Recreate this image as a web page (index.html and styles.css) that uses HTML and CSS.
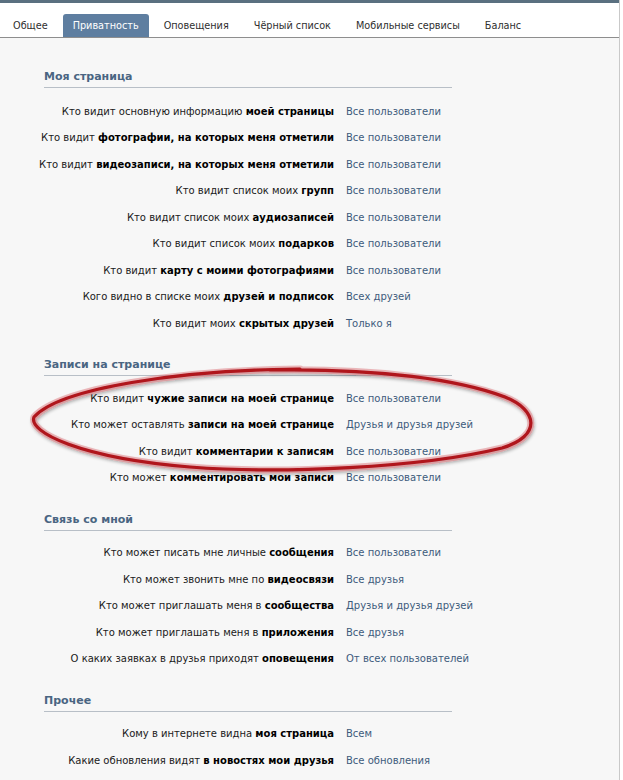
FILE: index.html
```html
<!DOCTYPE html>
<html lang="ru">
<head>
<meta charset="utf-8">
<title>Приватность</title>
<link rel="stylesheet" href="styles.css">
</head>
<body>
<div class="page">
  <div class="topbar"></div>
  <nav class="tabs">
    <a class="tab">Общее</a>
    <a class="tab active">Приватность</a>
    <a class="tab">Оповещения</a>
    <a class="tab">Чёрный список</a>
    <a class="tab">Мобильные сервисы</a>
    <a class="tab">Баланс</a>
  </nav>
  <main class="content">
    <section class="section">
      <h2 class="section-title">Моя страница</h2>
      <div class="rows">
        <div class="label">Кто видит основную информацию <b>моей страницы</b></div><div class="value">Все пользователи</div>
        <div class="label">Кто видит <b>фотографии, на которых меня отметили</b></div><div class="value">Все пользователи</div>
        <div class="label">Кто видит <b>видеозаписи, на которых меня отметили</b></div><div class="value">Все пользователи</div>
        <div class="label">Кто видит список моих <b>групп</b></div><div class="value">Все пользователи</div>
        <div class="label">Кто видит список моих <b>аудиозаписей</b></div><div class="value">Все пользователи</div>
        <div class="label">Кто видит список моих <b>подарков</b></div><div class="value">Все пользователи</div>
        <div class="label">Кто видит <b>карту с моими фотографиями</b></div><div class="value">Все пользователи</div>
        <div class="label">Кого видно в списке моих <b>друзей и подписок</b></div><div class="value">Всех друзей</div>
        <div class="label">Кто видит моих <b>скрытых друзей</b></div><div class="value">Только я</div>
      </div>
    </section>
    <section class="section">
      <h2 class="section-title">Записи на странице</h2>
      <div class="rows">
        <div class="label">Кто видит <b>чужие записи на моей странице</b></div><div class="value">Все пользователи</div>
        <div class="label">Кто может оставлять <b>записи на моей странице</b></div><div class="value">Друзья и друзья друзей</div>
        <div class="label">Кто видит <b>комментарии к записям</b></div><div class="value">Все пользователи</div>
        <div class="label">Кто может <b>комментировать мои записи</b></div><div class="value">Все пользователи</div>
      </div>
    </section>
    <section class="section">
      <h2 class="section-title">Связь со мной</h2>
      <div class="rows">
        <div class="label">Кто может писать мне личные <b>сообщения</b></div><div class="value">Все пользователи</div>
        <div class="label">Кто может звонить мне по <b>видеосвязи</b></div><div class="value">Все друзья</div>
        <div class="label">Кто может приглашать меня в <b>сообщества</b></div><div class="value">Друзья и друзья друзей</div>
        <div class="label">Кто может приглашать меня в <b>приложения</b></div><div class="value">Все друзья</div>
        <div class="label">О каких заявках в друзья приходят <b>оповещения</b></div><div class="value">От всех пользователей</div>
      </div>
    </section>
    <section class="section">
      <h2 class="section-title">Прочее</h2>
      <div class="rows">
        <div class="label">Кому в интернете видна <b>моя страница</b></div><div class="value">Всем</div>
        <div class="label">Какие обновления видят <b>в новостях мои друзья</b></div><div class="value">Все обновления</div>
      </div>
    </section>
  </main>
  <svg class="mark" width="623" height="780" viewBox="0 0 623 780" aria-hidden="true">
    <defs>
      <filter id="shadow" x="-10%" y="-30%" width="120%" height="160%">
        <feGaussianBlur in="SourceAlpha" stdDeviation="1.5"/>
        <feOffset dx="1" dy="2" result="b"/>
        <feComponentTransfer><feFuncA type="linear" slope="0.35"/></feComponentTransfer>
        <feMerge><feMergeNode/><feMergeNode in="SourceGraphic"/></feMerge>
      </filter>
    </defs>
    <g filter="url(#shadow)" fill="none">
      <path d="M300 369 C 180 370, 60 388, 34 417 C 28 432, 80 458, 190 467 C 280 474, 420 468, 502 448 C 542 436, 538 410, 505 397 C 460 380, 380 368, 270 370" stroke="#e07a80" stroke-width="7" stroke-linecap="round" opacity="0.5"/>
      <path d="M300 369 C 180 370, 60 388, 34 417 C 28 432, 80 458, 190 467 C 280 474, 420 468, 502 448 C 542 436, 538 410, 505 397 C 460 380, 380 368, 270 370" stroke="#b0141c" stroke-width="3.2" stroke-linecap="round"/>
    </g>
  </svg>
</div>
</body>
</html>
```
FILE: styles.css
```css
* { box-sizing: border-box; }
html, body { margin: 0; padding: 0; }
body {
  background: #ffffff;
  font-family: "DejaVu Sans", Verdana, sans-serif;
  font-size: 10px;
  color: #000;
}
.page {
  position: relative;
  width: 620px;
  height: 780px;
  background: #f7f7f7;
  border-right: 1px solid #c9c9c9;
  overflow: hidden;
}
.topbar {
  height: 3px;
  background: #5a7080;
}
.tabs {
  display: flex;
  align-items: flex-end;
  height: 35px;
  padding-left: 3px;
  background: #ffffff;
  border-bottom: 1px solid #8e8e8e;
}
.tab {
  display: block;
  height: 23px;
  line-height: 23px;
  padding: 0 10px;
  margin-right: 5px;
  color: #2f2f2f;
  font-size: 9.7px;
  border-radius: 3px 3px 0 0;
  white-space: nowrap;
}
.tab.active {
  background: #5e7ea0;
  color: #ffffff;
}
.content {
  padding: 31px 0 0 44px;
}
.section {
  width: 408px;
  margin-bottom: 19.5px;
}
.section-title {
  margin: 0;
  font-size: 11px;
  font-weight: bold;
  line-height: 16px;
  padding-bottom: 2px;
  color: #4a6582;
  border-bottom: 1px solid #b8bfc7;
}
.section:nth-child(2) .section-title,
.section:nth-child(3) .section-title,
.section:nth-child(4) .section-title {
  padding-top: 1px;
  line-height: 16px;
}
.rows {
  display: grid;
  grid-template-columns: 304px auto;
  column-gap: 12px;
  grid-auto-rows: 26.5px;
  align-items: center;
  padding-top: 10px;
  margin-left: -14px;
}
.section:nth-child(n+2) .rows {
  padding-top: 9px;
}
.label {
  text-align: right;
  white-space: nowrap;
  color: #1a1a1a;
}
.label b { color: #000; }
.value {
  white-space: nowrap;
  color: #3d5b7c;
}
.mark {
  position: absolute;
  left: 0;
  top: 0;
  pointer-events: none;
}
```
